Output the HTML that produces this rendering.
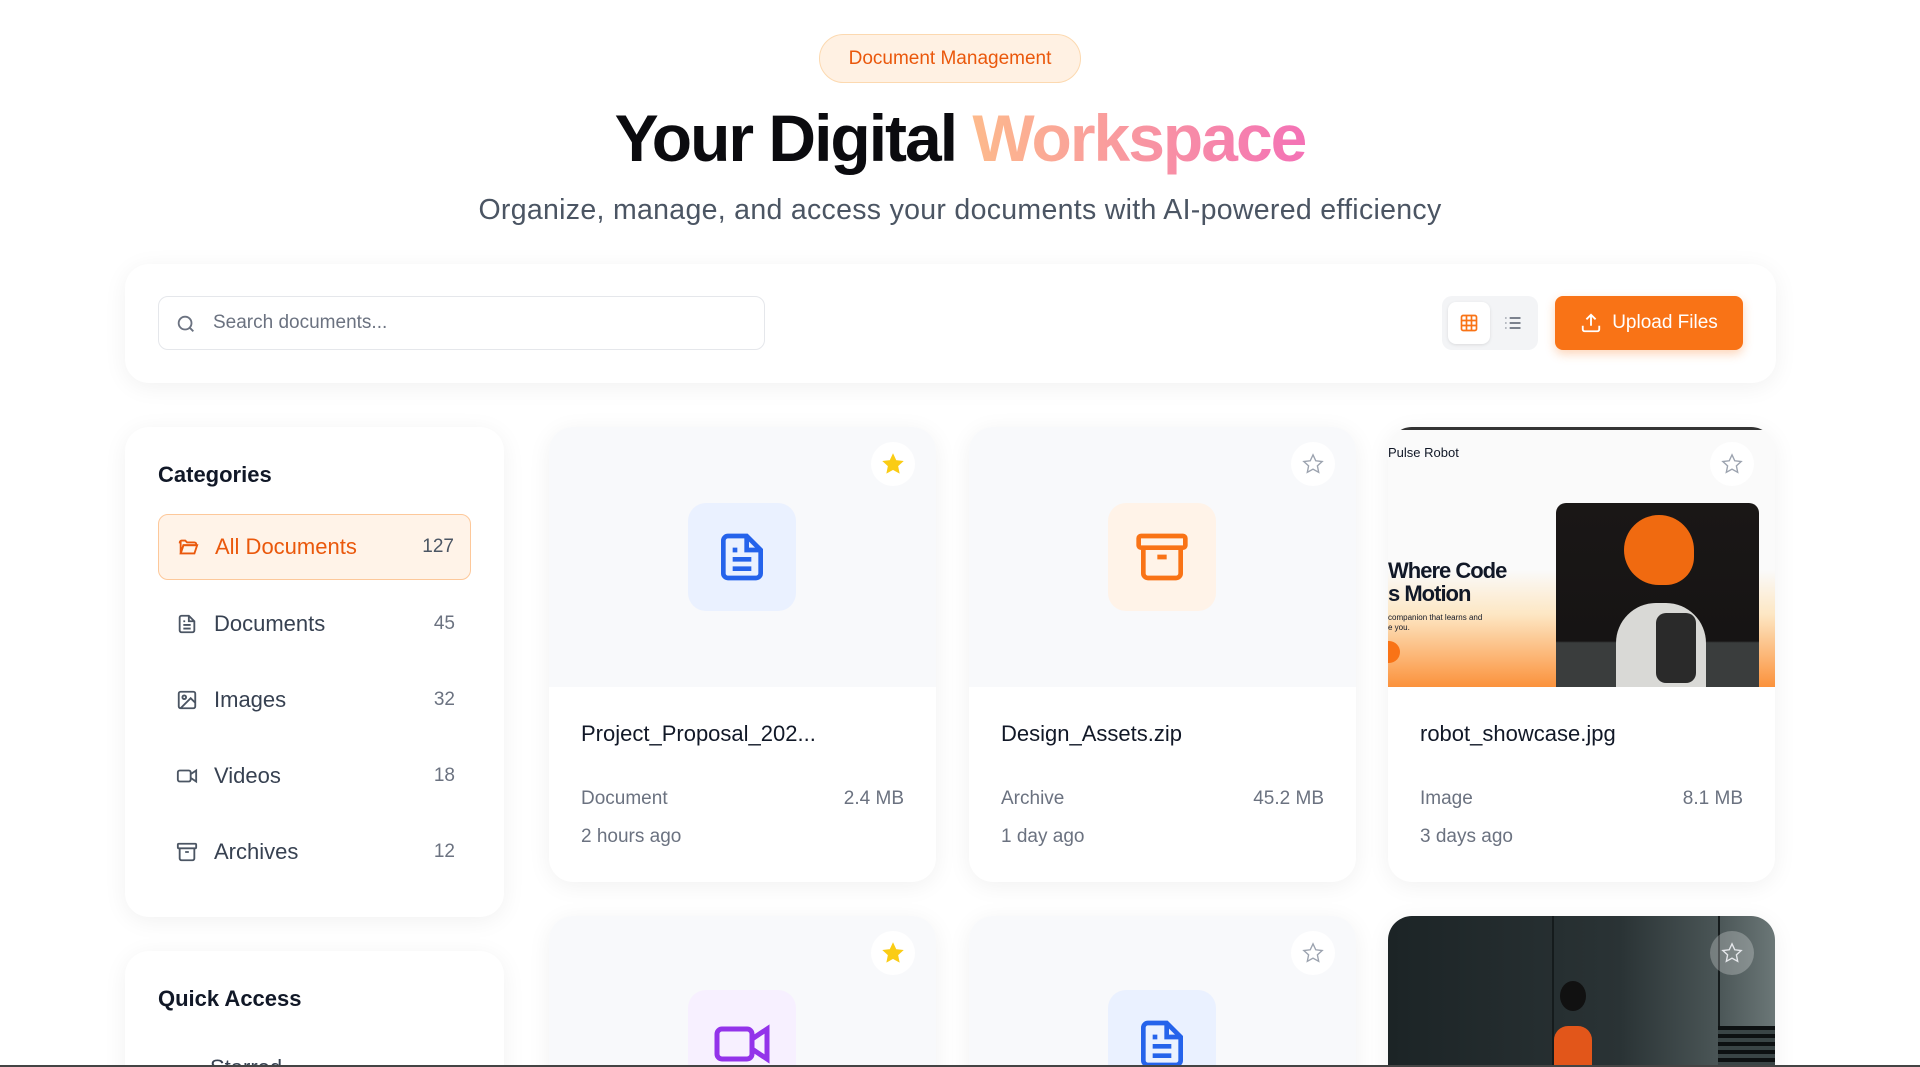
<!DOCTYPE html>
<html><head><meta charset="utf-8"><style>
*{box-sizing:border-box;margin:0;padding:0}
html,body{width:1920px;height:1067px;overflow:hidden}
body{background:#fff;font-family:"Liberation Sans",sans-serif;color:#111827;position:relative}
#wrap{position:absolute;left:0;top:0;width:1920px;height:1067px;overflow:hidden}
.abs{position:absolute}
.badge{left:819px;top:34px;width:262px;height:49px;border-radius:25px;background:#fff1e3;border:1.5px solid #fcd9b0;color:#ea580c;font-size:19px;display:flex;align-items:center;justify-content:center}
h1{position:absolute;left:0;width:1920px;top:100px;text-align:center;font-size:66px;font-weight:700;letter-spacing:-2px;color:#0b0b0f}
h1 span{background:linear-gradient(90deg,#fdba8c,#f472b6);-webkit-background-clip:text;color:transparent}
.sub{left:0;width:1920px;top:194px;text-align:center;font-size:28.5px;color:#4b5563;letter-spacing:0.3px}
.card{background:#fff;border-radius:24px;box-shadow:0 4px 24px rgba(0,0,0,.06)}
.search{left:158px;top:296px;width:607px;height:54px;border:1.5px solid #e5e7eb;border-radius:10px;display:flex;align-items:center;padding-left:54px;font-size:19px;color:#6b7280}
.toggle{left:1442px;top:296px;width:96px;height:54px;background:#f3f4f6;border-radius:10px}
.upload{left:1555px;top:296px;width:188px;height:54px;background:#f97316;border-radius:8px;color:#fff;font-size:19px;display:flex;align-items:center;justify-content:center;gap:10px;box-shadow:0 4px 10px rgba(249,115,22,.3)}
.cat{left:158px;width:313px;height:66px;display:flex;align-items:center;padding:0 16px 0 18px;font-size:22px;color:#374151}
.cat .n{margin-left:auto;font-size:19px;color:#6b7280}
.cat svg{margin-right:16px}
.fc{width:387px;height:455px;overflow:hidden}
.fc .img{height:260px;background:#f8f9fb;position:relative}
.ib{position:absolute;left:139px;top:76px;width:108px;height:108px;border-radius:18px;display:flex;align-items:center;justify-content:center}
.star{position:absolute;right:21px;top:15px;width:44px;height:44px;border-radius:50%;background:#fff;display:flex;align-items:center;justify-content:center}
.nm{position:absolute;left:32px;top:294px;font-size:22px;color:#111827}
</style></head><body><div id="wrap">
<div class="abs badge">Document Management</div>
<h1>Your Digital <span>Workspace</span></h1>
<div class="abs sub">Organize, manage, and access your documents with AI-powered efficiency</div>

<div class="abs card" style="left:125px;top:264px;width:1651px;height:119px"></div>
<div class="abs search"><svg class="abs" style="left:16px;top:16px" width="22" height="22" viewBox="0 0 24 24" fill="none" stroke="#6b7280" stroke-width="2"><circle cx="11" cy="11" r="7"/><path d="M20 20l-4-4"/></svg>Search documents...</div>
<div class="abs toggle"><div class="abs" style="left:6px;top:6px;width:42px;height:42px;background:#fff;border-radius:8px;box-shadow:0 1px 3px rgba(0,0,0,.1)"></div>
<svg class="abs" style="left:17px;top:17px" width="20" height="20" viewBox="0 0 24 24" fill="none" stroke="#f97316" stroke-width="2"><rect x="3" y="3" width="18" height="18" rx="2"/><path d="M3 9h18M3 15h18M9 3v18M15 3v18"/></svg>
<svg class="abs" style="left:61px;top:17px" width="20" height="20" viewBox="0 0 24 24" fill="none" stroke="#6b7280" stroke-width="2"><path d="M8 6h13M8 12h13M8 18h13M3 6h1M3 12h1M3 18h1"/></svg></div>
<div class="abs upload"><svg width="22" height="22" viewBox="0 0 24 24" fill="none" stroke="#fff" stroke-width="2"><path d="M21 15v4a2 2 0 0 1-2 2H5a2 2 0 0 1-2-2v-4M17 8l-5-5-5 5M12 3v12"/></svg>Upload Files</div>

<div class="abs card" style="left:125px;top:427px;width:379px;height:490px"></div>
<div class="abs" style="left:158px;top:462px;font-size:22px;font-weight:700">Categories</div>
<div class="abs cat" style="top:514px;background:#fff3e8;border:1.5px solid #fdc89a;border-radius:10px;color:#ea580c"><svg width="22" height="22" viewBox="0 0 24 24" fill="none" stroke="#ea580c" stroke-width="2"><path d="M3 7a2 2 0 0 1 2-2h4l2 2h8a2 2 0 0 1 2 2v1H7l-3 9V7z"/><path d="M4 19l3-9h15l-3 9z"/></svg>All Documents<span class="n" style="color:#4b5563">127</span></div>
<div class="abs cat" style="top:591px"><svg width="22" height="22" viewBox="0 0 24 24" fill="none" stroke="#4b5563" stroke-width="2"><path d="M14 3H6a2 2 0 0 0-2 2v14a2 2 0 0 0 2 2h12a2 2 0 0 0 2-2V9z"/><path d="M14 3v6h6M8 13h8M8 17h8M8 9h2"/></svg>Documents<span class="n">45</span></div>
<div class="abs cat" style="top:667px"><svg width="22" height="22" viewBox="0 0 24 24" fill="none" stroke="#4b5563" stroke-width="2"><rect x="3" y="3" width="18" height="18" rx="2"/><circle cx="9" cy="9" r="2"/><path d="M21 15l-5-5L5 21"/></svg>Images<span class="n">32</span></div>
<div class="abs cat" style="top:743px"><svg width="22" height="22" viewBox="0 0 24 24" fill="none" stroke="#4b5563" stroke-width="2"><rect x="2" y="6" width="14" height="12" rx="2"/><path d="M16 10l6-4v12l-6-4"/></svg>Videos<span class="n">18</span></div>
<div class="abs cat" style="top:819px"><svg width="22" height="22" viewBox="0 0 24 24" fill="none" stroke="#4b5563" stroke-width="2"><rect x="2" y="3" width="20" height="5" rx="1"/><path d="M4 8v11a2 2 0 0 0 2 2h12a2 2 0 0 0 2-2V8M10 12h4"/></svg>Archives<span class="n">12</span></div>

<div class="abs card" style="left:125px;top:951px;width:379px;height:200px"></div>
<div class="abs" style="left:158px;top:986px;font-size:22px;font-weight:700">Quick Access</div>
<div class="abs" style="left:210px;top:1055px;font-size:22px;color:#374151">Starred</div>

<!-- row 1 -->
<div class="abs card fc" style="left:549px;top:427px"><div class="img"><div class="ib" style="background:#eaf1ff"><svg width="56" height="56" viewBox="0 0 24 24" fill="none" stroke="#2563eb" stroke-width="2"><path d="M14 3H6a2 2 0 0 0-2 2v14a2 2 0 0 0 2 2h12a2 2 0 0 0 2-2V9z"/><path d="M14 3v6h6M8 13h8M8 17h8M8 9h2"/></svg></div><div class="star"><svg width="22" height="22" viewBox="0 0 24 24" fill="#facc15" stroke="#facc15" stroke-width="1.5"><path d="M12 2l3 6.5 7 .8-5.2 4.8 1.4 7L12 17.6 5.8 21.1l1.4-7L2 9.3l7-.8z"/></svg></div></div>
<div class="nm">Project_Proposal_202...</div>
<div class="abs" style="left:32px;right:32px;top:361px;font-size:19px;color:#6b7280;display:flex;justify-content:space-between"><span>Document</span><span>2.4 MB</span></div>
<div class="abs" style="left:32px;top:399px;font-size:19px;color:#6b7280">2 hours ago</div></div>

<div class="abs card fc" style="left:969px;top:427px"><div class="img"><div class="ib" style="background:#fff3e8"><svg width="56" height="56" viewBox="0 0 24 24" fill="none" stroke="#f97316" stroke-width="2"><rect x="2" y="3" width="20" height="5" rx="1"/><path d="M4 8v11a2 2 0 0 0 2 2h12a2 2 0 0 0 2-2V8M10 12h4"/></svg></div><div class="star"><svg width="22" height="22" viewBox="0 0 24 24" fill="none" stroke="#9ca3af" stroke-width="1.5"><path d="M12 2l3 6.5 7 .8-5.2 4.8 1.4 7L12 17.6 5.8 21.1l1.4-7L2 9.3l7-.8z"/></svg></div></div>
<div class="nm">Design_Assets.zip</div>
<div class="abs" style="left:32px;right:32px;top:361px;font-size:19px;color:#6b7280;display:flex;justify-content:space-between"><span>Archive</span><span>45.2 MB</span></div>
<div class="abs" style="left:32px;top:399px;font-size:19px;color:#6b7280">1 day ago</div></div>

<div class="abs card fc" style="left:1388px;top:427px"><div class="img" style="background:linear-gradient(180deg,#fafafa 0%,#fafafa 55%,#fde7c4 72%,#fb923c 100%)">
<div class="abs" style="left:0;top:0;width:387px;height:3px;background:#333"></div>
<div class="abs" style="left:0;top:18px;font-size:13px">Pulse Robot</div>
<div class="abs" style="left:0;top:132px;font-size:22px;font-weight:700;letter-spacing:-1px;line-height:23px">Where Code<br>s Motion</div>
<div class="abs" style="left:0;top:186px;font-size:8px;line-height:10px">companion that learns and<br>e you.</div>
<div class="abs" style="left:-10px;top:214px;width:22px;height:22px;border-radius:50%;background:#f97316"></div>
<div class="abs" style="left:168px;top:76px;width:203px;height:184px;border-radius:10px 10px 0 0;background:linear-gradient(180deg,#1a1716 0%,#161414 75%,#3a3d3d 76%,#3a3d3d 100%)">
<div class="abs" style="left:68px;top:12px;width:70px;height:70px;border-radius:50% 50% 40% 50%;background:#f06a10"></div>
<div class="abs" style="left:60px;top:100px;width:90px;height:84px;border-radius:40px 40px 0 0;background:#d9d9d6"></div>
<div class="abs" style="left:100px;top:110px;width:40px;height:70px;border-radius:10px;background:#2a2a2a"></div></div>
<div class="star"><svg width="22" height="22" viewBox="0 0 24 24" fill="none" stroke="#9ca3af" stroke-width="1.5"><path d="M12 2l3 6.5 7 .8-5.2 4.8 1.4 7L12 17.6 5.8 21.1l1.4-7L2 9.3l7-.8z"/></svg></div></div>
<div class="nm">robot_showcase.jpg</div>
<div class="abs" style="left:32px;right:32px;top:361px;font-size:19px;color:#6b7280;display:flex;justify-content:space-between"><span>Image</span><span>8.1 MB</span></div>
<div class="abs" style="left:32px;top:399px;font-size:19px;color:#6b7280">3 days ago</div></div>

<!-- row 2 -->
<div class="abs card fc" style="left:549px;top:916px"><div class="img"><div class="ib" style="background:#f7f0ff;top:74px"><svg width="60" height="60" viewBox="0 0 24 24" fill="none" stroke="#9333ea" stroke-width="2"><rect x="2" y="6" width="14" height="12" rx="2"/><path d="M16 10l6-4v12l-6-4z"/></svg></div><div class="star"><svg width="22" height="22" viewBox="0 0 24 24" fill="#facc15" stroke="#facc15" stroke-width="1.5"><path d="M12 2l3 6.5 7 .8-5.2 4.8 1.4 7L12 17.6 5.8 21.1l1.4-7L2 9.3l7-.8z"/></svg></div></div></div>
<div class="abs card fc" style="left:969px;top:916px"><div class="img"><div class="ib" style="background:#eaf1ff;top:74px"><svg width="56" height="56" viewBox="0 0 24 24" fill="none" stroke="#2563eb" stroke-width="2"><path d="M14 3H6a2 2 0 0 0-2 2v14a2 2 0 0 0 2 2h12a2 2 0 0 0 2-2V9z"/><path d="M14 3v6h6M8 13h8M8 17h8M8 9h2"/></svg></div><div class="star"><svg width="22" height="22" viewBox="0 0 24 24" fill="none" stroke="#9ca3af" stroke-width="1.5"><path d="M12 2l3 6.5 7 .8-5.2 4.8 1.4 7L12 17.6 5.8 21.1l1.4-7L2 9.3l7-.8z"/></svg></div></div></div>
<div class="abs card fc" style="left:1388px;top:916px"><div class="img" style="background:linear-gradient(90deg,#1c2426 0%,#2a3335 60%,#4a5556 85%,#6b7777 100%)">
<div class="abs" style="left:164px;top:0;width:2px;height:260px;background:#151b1c"></div>
<div class="abs" style="left:330px;top:0;width:2px;height:260px;background:#151b1c"></div>
<div class="abs" style="left:172px;top:65px;width:26px;height:30px;border-radius:50%;background:#111"></div>
<div class="abs" style="left:166px;top:110px;width:38px;height:60px;border-radius:14px;background:#e2561a"></div>
<div class="abs" style="left:330px;top:110px;width:57px;height:60px;background:repeating-linear-gradient(180deg,#0d1112 0 4px,#3a4546 4px 8px)"></div>
<div class="star" style="background:rgba(255,255,255,.25)"><svg width="22" height="22" viewBox="0 0 24 24" fill="none" stroke="#e5e7eb" stroke-width="1.5"><path d="M12 2l3 6.5 7 .8-5.2 4.8 1.4 7L12 17.6 5.8 21.1l1.4-7L2 9.3l7-.8z"/></svg></div></div></div>
<div class="abs" style="left:0;top:1065px;width:1920px;height:2px;background:#444"></div>
</div></body></html>
